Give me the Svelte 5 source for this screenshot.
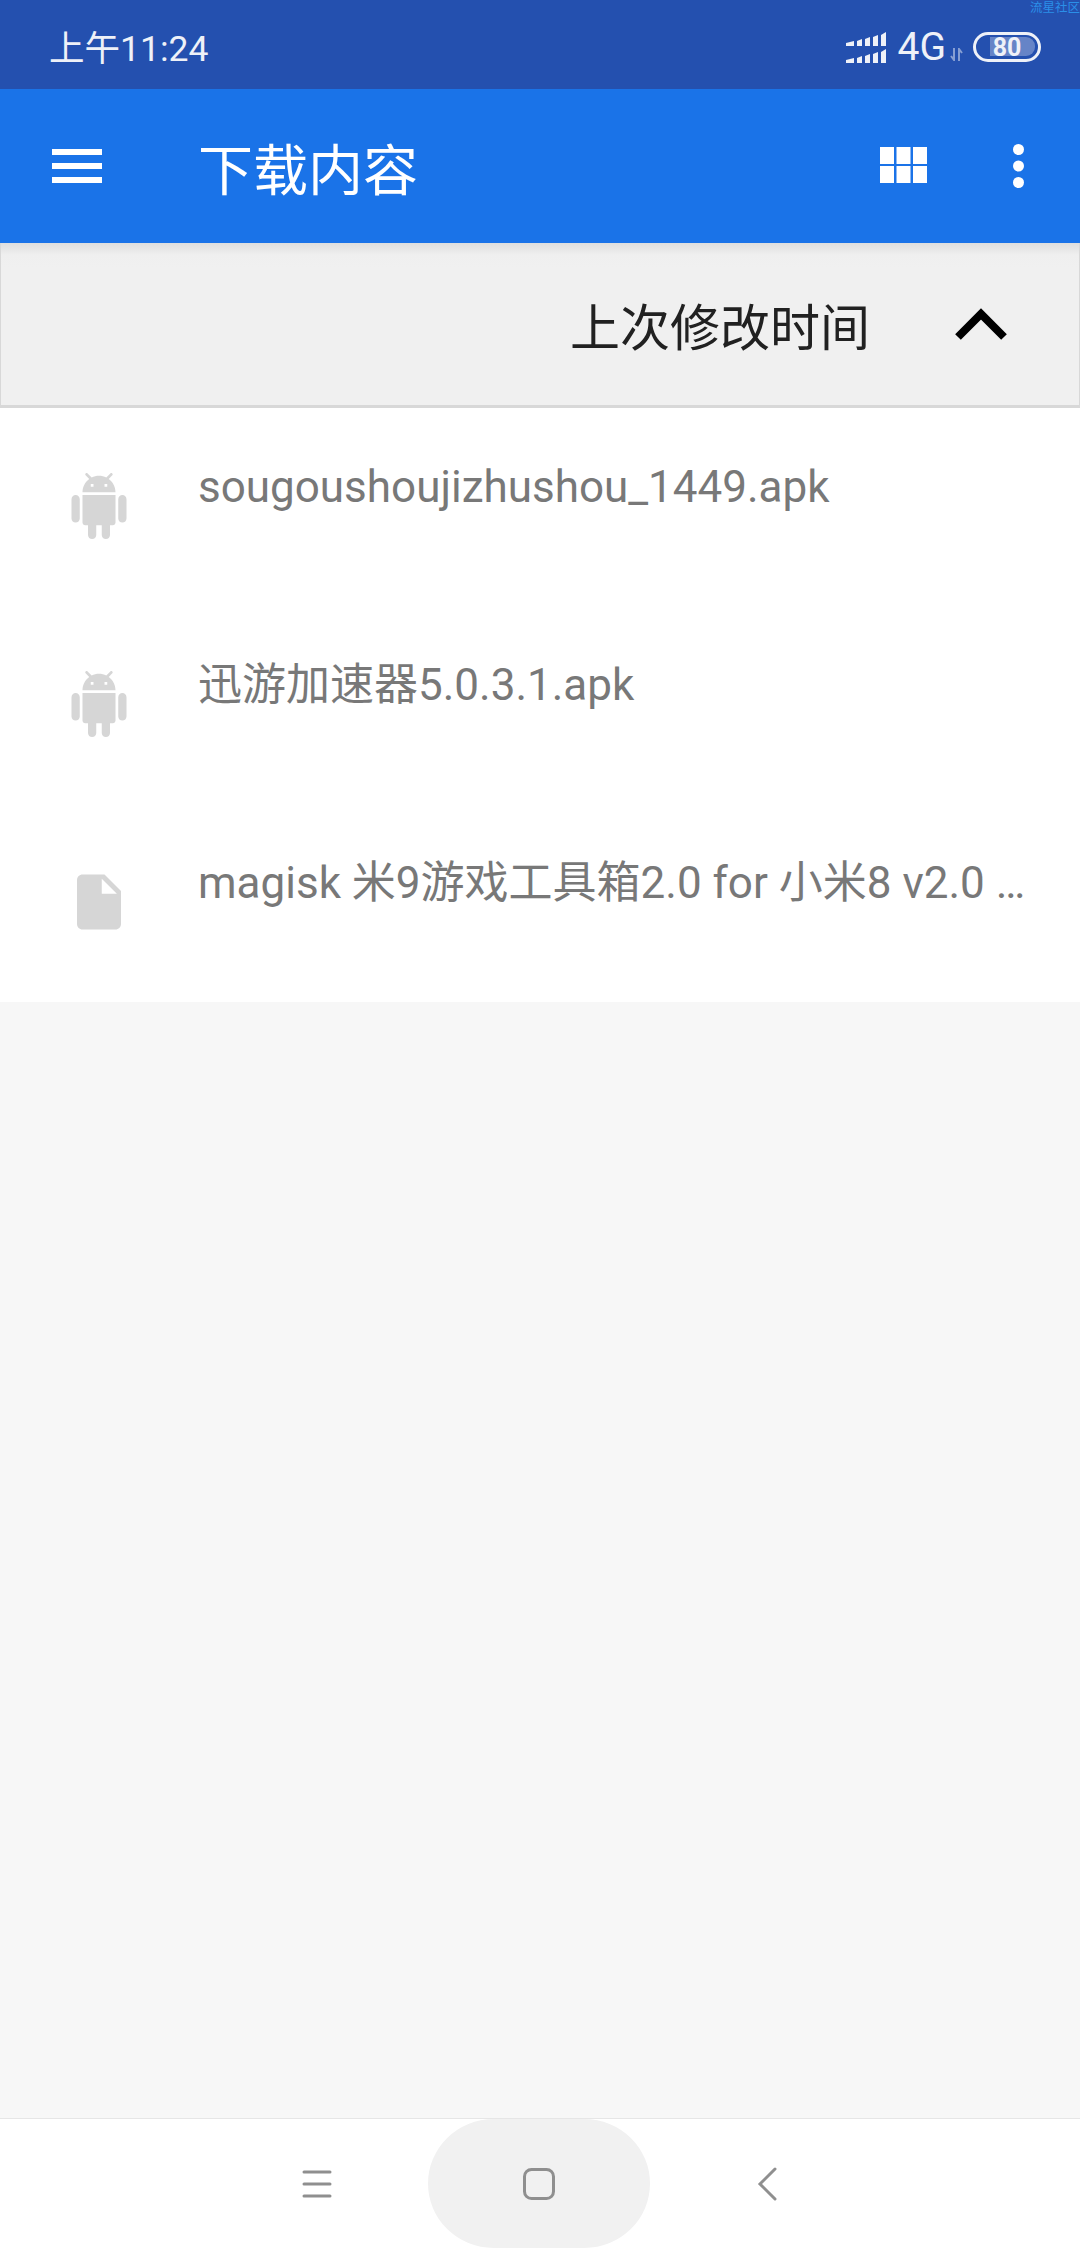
<script>
  const android = "M6 18c0 .55.45 1 1 1h1v3.5c0 .83.67 1.5 1.5 1.5s1.5-.67 1.5-1.5V19h2v3.5c0 .83.67 1.5 1.5 1.5s1.5-.67 1.5-1.5V19h1c.55 0 1-.45 1-1V8H6v10zM3.5 8C2.67 8 2 8.67 2 9.5v7c0 .83.67 1.5 1.5 1.5S5 17.33 5 16.5v-7C5 8.67 4.33 8 3.5 8zm17 0c-.83 0-1.5.67-1.5 1.5v7c0 .83.67 1.5 1.5 1.5s1.5-.67 1.5-1.5v-7c0-.83-.67-1.5-1.5-1.5zm-4.97-5.84l1.3-1.3c.2-.2.2-.51 0-.71-.2-.2-.51-.2-.71 0l-1.48 1.48C13.85 1.23 12.95 1 12 1c-.96 0-1.86.23-2.66.63L7.85.15c-.2-.2-.51-.2-.71 0-.2.2-.2.51 0 .71l1.31 1.31C6.97 3.26 6 5.01 6 7h12c0-1.99-.97-3.75-2.47-4.84zM10 5H9V4h1v1zm5 0h-1V4h1v1z";
  const file = "M6 2c-1.1 0-1.99.9-1.99 2L4 20c0 1.1.89 2 1.99 2H18c1.1 0 2-.9 2-2V8l-6-6H6zm7 7V3.5L18.5 9H13z";

  const files = [
    { name: "sougoushoujizhushou_1449.apk", icon: android },
    { name: "迅游加速器5.0.3.1.apk", icon: android },
    { name: "magisk 米9游戏工具箱2.0 for 小米8 v2.0 …", icon: file }
  ];

  // signal bars: [x, width, left height, right height], same for both rows
  const bars = [
    [0, 8, 3, 5],
    [11, 5, 5, 7],
    [19, 5, 7, 9],
    [27, 5, 9, 11],
    [35, 5, 11, 14]
  ];
  const barPoints = (b, bottom) =>
    `${b[0]},${bottom} ${b[0]},${bottom - b[2]} ${b[0] + b[1]},${bottom - b[3]} ${b[0] + b[1]},${bottom}`;
</script>

<div class="screen">
  <div class="status">
    <span class="time">上午11:24</span>
    <div class="status-right">
      <svg class="signal" width="40" height="31" viewBox="0 0 40 31" fill="#eef1f8">
        {#each bars as b}
          <polygon points={barPoints(b, 14)} />
          <polygon points={barPoints(b, 31)} />
        {/each}
      </svg>
      <span class="net">4G</span>
      <svg class="arrows" width="13" height="13" viewBox="0 0 13 13" fill="none" stroke="#fff" stroke-width="2" opacity="0.45">
        <path d="M4 0v11M1 8l3 4 0-4M9 13V2M12 5L9 1v4" />
      </svg>
      <div class="battery">
        <div class="level"></div>
        <span class="percent">80</span>
      </div>
    </div>
    <span class="mark">流星社区</span>
  </div>

  <header class="toolbar">
    <svg class="menu" width="50" height="34" viewBox="0 0 50 34" fill="#fff">
      <rect y="0" width="50" height="6" />
      <rect y="14" width="50" height="6" />
      <rect y="28" width="50" height="6" />
    </svg>
    <span class="title">下载内容</span>
    <svg class="grid" width="47" height="36" viewBox="0 0 47 36" fill="#fff">
      <rect x="0" y="0" width="14" height="17" />
      <rect x="16.500" y="0" width="14" height="17" />
      <rect x="33" y="0" width="14" height="17" />
      <rect x="0" y="19" width="14" height="17" />
      <rect x="16.500" y="19" width="14" height="17" />
      <rect x="33" y="19" width="14" height="17" />
    </svg>
    <svg class="more" width="11" height="44" viewBox="0 0 11 44" fill="#fff">
      <circle cx="5.500" cy="5.500" r="5.500" />
      <circle cx="5.500" cy="22" r="5.500" />
      <circle cx="5.500" cy="38.500" r="5.500" />
    </svg>
  </header>

  <div class="sortbar">
    <span class="sort-label">上次修改时间</span>
    <svg class="chevron" width="52" height="32" viewBox="0 0 52 32">
      <path d="M3 29L26 6l23 23" fill="none" stroke="#000" stroke-width="8" />
    </svg>
  </div>

  <ul class="list">
    {#each files as f}
      <li class="row">
        <svg class="file-icon" width="66" height="66" viewBox="0 0 24 24" fill="#d6d6d6">
          <path d={f.icon} />
        </svg>
        <span class="name">{f.name}</span>
      </li>
    {/each}
  </ul>

  <div class="empty"></div>

  <nav class="navbar">
    <svg class="nav-menu" width="30" height="28" viewBox="0 0 30 28" fill="none" stroke="#8f8f8f" stroke-width="3" stroke-linecap="round">
      <path d="M2 2h26M2 14h26M2 26h26" />
    </svg>
    <div class="home">
      <svg width="32" height="32" viewBox="0 0 32 32" fill="none" stroke="#8f8f8f" stroke-width="3">
        <rect x="1.500" y="1.500" width="29" height="29" rx="7" />
      </svg>
    </div>
    <svg class="nav-back" width="20" height="34" viewBox="0 0 20 34" fill="none" stroke="#8f8f8f" stroke-width="3" stroke-linecap="round">
      <path d="M18 2L3 17l15 15" />
    </svg>
  </nav>
</div>

<style>
  :global(body) {
    margin: 0;
    background: #f7f7f7;
  }

  .screen {
    width: 1080px;
    height: 2248px;
    display: flex;
    flex-direction: column;
    font-family: Roboto, "Noto Sans CJK SC", sans-serif;
    overflow: hidden;
  }

  .status {
    position: relative;
    height: 89px;
    flex: none;
    display: flex;
    align-items: center;
    padding: 5px 39px 0 49px;
    box-sizing: border-box;
    background: #2450af;
    color: #eef1f8;
  }

  .time {
    font-size: 35.5px;
    margin-top: -3px;
  }

  .status-right {
    margin-left: auto;
    display: flex;
    align-items: center;
  }

  .net {
    font-size: 39px;
    margin-left: 12px;
  }

  .arrows {
    margin: 14px 10px 0 4px;
  }

  .battery {
    position: relative;
    width: 68px;
    height: 30px;
    box-sizing: border-box;
    border: 3px solid #eef1f8;
    border-radius: 15px;
    display: flex;
    align-items: center;
    justify-content: center;
  }

  .level {
    position: absolute;
    top: 2px;
    bottom: 3px;
    left: 14px;
    right: 3px;
    background: rgba(255, 255, 255, 0.3);
    border-radius: 0 9px 9px 0;
  }

  .percent {
    position: relative;
    font-size: 25px;
    font-weight: 700;
    color: #eef1f8;
  }

  .mark {
    position: absolute;
    top: 0;
    right: 0;
    font-size: 12.500px;
    line-height: 15px;
    color: #2b8fe8;
    white-space: nowrap;
  }

  .toolbar {
    height: 154px;
    flex: none;
    display: flex;
    align-items: center;
    background: #1a73e8;
    color: #fff;
  }

  .menu {
    margin-left: 52px;
  }

  .title {
    margin-left: 96px;
    font-size: 55px;
  }

  .grid {
    margin-left: auto;
    margin-top: -2px;
  }

  .more {
    margin-left: 86px;
    margin-right: 56px;
  }

  .sortbar {
    height: 165px;
    flex: none;
    display: flex;
    align-items: center;
    justify-content: flex-end;
    box-sizing: border-box;
    padding-right: 72px;
    background: linear-gradient(#dedede, #efefef 12px, #f0f0f0 24px);
    border: 1px solid #d8d8d8;
    border-top: 0;
    border-bottom-width: 3px;
  }

  .sort-label {
    font-size: 50px;
    color: #212121;
    margin-right: 85px;
  }

  .list {
    margin: 0;
    padding: 0;
    list-style: none;
    background: #fff;
  }

  .row {
    height: 198px;
    display: flex;
    align-items: flex-start;
    box-sizing: border-box;
    padding: 65px 0 0 66px;
  }

  .name {
    margin: -16px 0 0 66px;
    font-size: 44px;
    line-height: 60px;
    color: #787878;
    white-space: nowrap;
  }

  .empty {
    flex: 1;
    background: #f7f7f7;
  }

  .navbar {
    height: 130px;
    flex: none;
    display: flex;
    align-items: center;
    box-sizing: border-box;
    background: #fff;
    border-top: 1px solid #e6e6e6;
  }

  .nav-menu {
    margin-left: 302px;
  }

  .home {
    width: 222px;
    height: 100%;
    margin-left: 96px;
    background: #f1f1f1;
    border-radius: 66px / 65px;
    display: flex;
    align-items: center;
    justify-content: center;
  }

  .nav-back {
    margin-left: 107px;
  }
</style>
